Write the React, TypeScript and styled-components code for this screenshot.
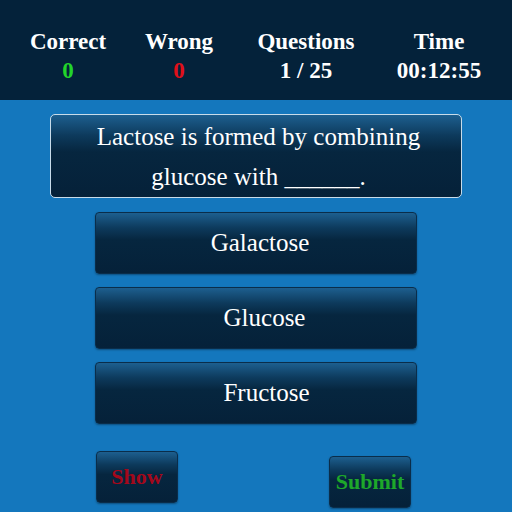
import React from "react";
import styled, { createGlobalStyle } from "styled-components";

const GlobalStyle = createGlobalStyle`
    html, body {
        margin: 0;
        padding: 0;
        background: #1477bd;
        font-family: "Liberation Serif", "Times New Roman", serif;
    }
`;

const stats = [
    { label: "Correct", value: "0", tone: "good" },
    { label: "Wrong", value: "0", tone: "bad" },
    { label: "Questions", value: "1 / 25", tone: "plain" },
    { label: "Time", value: "00:12:55", tone: "plain" },
] as const;

// indent: the labels in the original sit a little right of centre
const answers = [
    { text: "Galactose", indent: 8 },
    { text: "Glucose", indent: 17 },
    { text: "Fructose", indent: 21 },
];

export default function App() {
    return (
        <>
            <GlobalStyle />
            <Page>
                <Header>
                    {stats.map((stat) => (
                        <Stat key={stat.label}>
                            <StatLabel>{stat.label}</StatLabel>
                            <StatValue $tone={stat.tone}>{stat.value}</StatValue>
                        </Stat>
                    ))}
                </Header>
                <Body>
                    <QuestionBox>
                        Lactose is formed by combining
                        <br />
                        glucose with ______.
                    </QuestionBox>
                    <AnswerList>
                        {answers.map((answer) => (
                            <AnswerButton key={answer.text} $indent={answer.indent}>
                                {answer.text}
                            </AnswerButton>
                        ))}
                    </AnswerList>
                    <Actions>
                        <ShowButton>Show</ShowButton>
                        <SubmitButton>Submit</SubmitButton>
                    </Actions>
                </Body>
            </Page>
        </>
    );
}

const Page = styled.div`
    width: 512px;
    height: 512px;
    overflow: hidden;
    background: #1477bd;
`;

const Header = styled.div`
    display: grid;
    grid-template-columns: 96px 126px 128px 138px;
    padding: 27px 0 0 20px;
    height: 73px;
    background: #04223a;
    color: #ffffff;
`;

const Stat = styled.div`
    text-align: center;
    font-weight: bold;
    font-size: 23px;
`;

const StatLabel = styled.div`
    line-height: 29px;
`;

const StatValue = styled.div<{ $tone: "good" | "bad" | "plain" }>`
    line-height: 29px;
    color: ${(p) => (p.$tone === "good" ? "#22d42a" : p.$tone === "bad" ? "#e0101a" : "#ffffff")};
`;

const Body = styled.div`
    display: flex;
    flex-direction: column;
    align-items: center;
    padding-top: 14px;
`;

const glossy = `
    background: linear-gradient(
        to bottom,
        #1d5f8f 0%,
        #0d3a5c 25%,
        #06263f 45%,
        #052139 100%
    );
`;

const QuestionBox = styled.div`
    ${glossy}
    box-sizing: border-box;
    width: 412px;
    padding: 2px 0 0 5px;
    border: 1px solid #c8dcea;
    border-radius: 5px;
    color: #ffffff;
    font-size: 25px;
    line-height: 40px;
    text-align: center;
`;

const AnswerList = styled.div`
    display: flex;
    flex-direction: column;
    gap: 13px;
    margin-top: 14px;
`;

const AnswerButton = styled.div<{ $indent: number }>`
    ${glossy}
    box-sizing: border-box;
    width: 322px;
    height: 62px;
    padding-left: ${(p) => p.$indent}px;
    border: 1px solid #0a2d4a;
    border-radius: 4px;
    box-shadow: 0 1px 2px rgba(0, 0, 0, 0.35);
    display: flex;
    align-items: center;
    justify-content: center;
    color: #ffffff;
    font-size: 25px;
`;

const Actions = styled.div`
    display: flex;
    justify-content: space-between;
    align-items: flex-start;
    width: 315px;
    margin: 27px 0 0 -5px;
`;

const ActionButton = styled.div`
    ${glossy}
    width: 80px;
    height: 50px;
    border: 1px solid #0a2d4a;
    border-radius: 4px;
    box-shadow: 0 1px 2px rgba(0, 0, 0, 0.35);
    display: flex;
    align-items: center;
    justify-content: center;
    font-weight: bold;
    font-size: 22px;
`;

const ShowButton = styled(ActionButton)`
    color: #a3081b;
`;

const SubmitButton = styled(ActionButton)`
    margin-top: 5px;
    color: #1ea82a;
`;
